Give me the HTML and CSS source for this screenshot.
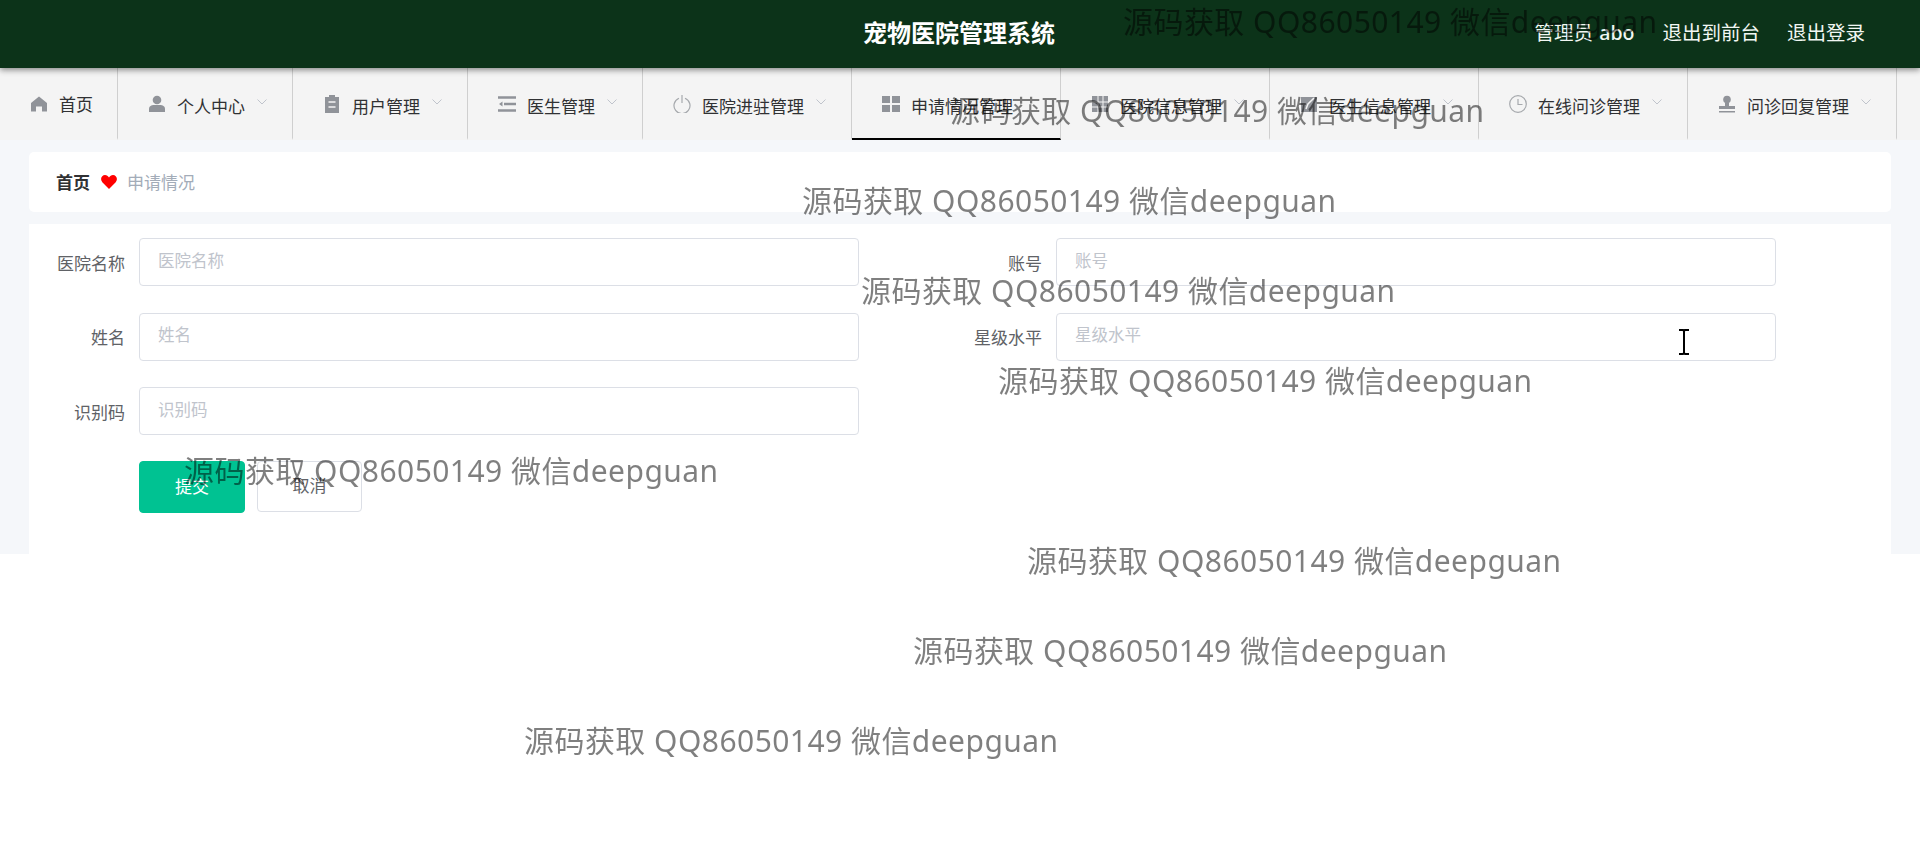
FILE: index.html
```html
<!DOCTYPE html>
<html lang="zh-CN">
<head>
<meta charset="utf-8">
<title>宠物医院管理系统</title>
<link rel="stylesheet" href="styles.css">
</head>
<body>
<header class="topbar">
  <div class="brand">宠物医院管理系统</div>
  <div class="top-links">
    <span class="user">管理员 <b>abo</b></span>
    <span>退出到前台</span>
    <span>退出登录</span>
  </div>
</header>
<nav class="menu">
  <a class="item home"><svg class="ic" viewBox="0 0 18 18"><path d="M9 1.500 1 8v8.500h5v-5h6v5h5V8z" fill="#909399"/></svg><span class="lift">首页</span></a>
  <a class="item"><svg class="ic" viewBox="0 0 18 18"><circle cx="9" cy="5" r="4.300" fill="#909399"/><path d="M1 17v-3c0-3 2.500-4 5-4h6c2.500 0 5 1 5 4v3z" fill="#909399"/></svg><span>个人中心</span><svg class="chev" viewBox="0 0 10 6"><path d="M.5.5 5 5 9.500.5" fill="none" stroke="#c0c4cc"/></svg></a>
  <a class="item"><svg class="ic" viewBox="0 0 18 18"><path d="M2 2h4V0h6v2h4v16H2z" fill="#909399"/><path d="M5.500 7h7M5.500 12h7" stroke="#f4f4f4" stroke-width="1.600"/></svg><span>用户管理</span><svg class="chev" viewBox="0 0 10 6"><path d="M.5.5 5 5 9.500.5" fill="none" stroke="#c0c4cc"/></svg></a>
  <a class="item"><svg class="ic" viewBox="0 0 18 18"><path d="M0 2.500h18M6 9h12M0 15.500h18" stroke="#909399" stroke-width="2.400"/><path d="M4.500 6.500 1 9l3.500 2.500z" fill="#909399"/></svg><span>医生管理</span><svg class="chev" viewBox="0 0 10 6"><path d="M.5.5 5 5 9.500.5" fill="none" stroke="#c0c4cc"/></svg></a>
  <a class="item"><svg class="ic" viewBox="0 0 18 18"><path d="M6 3.200a8 8 0 1 0 6 0M9 0v8" fill="none" stroke="#a6a9ad" stroke-width="1.200"/></svg><span>医院进驻管理</span><svg class="chev" viewBox="0 0 10 6"><path d="M.5.5 5 5 9.500.5" fill="none" stroke="#c0c4cc"/></svg></a>
  <a class="item active"><svg class="ic" viewBox="0 0 18 18"><path d="M0 1h8v7H0zM10 1h8v7h-8zM0 10h8v7H0zM10 10h8v7h-8z" fill="#909399"/></svg><span>申请情况管理</span></a>
  <a class="item"><svg class="ic" viewBox="0 0 18 18"><path d="M1 1h16v16H1z" fill="#909399"/><path d="M1 7h16M1 12h16M7 1v16M12 1v16" stroke="#f4f4f4"/></svg><span>医院信息管理</span><svg class="chev" viewBox="0 0 10 6"><path d="M.5.5 5 5 9.500.5" fill="none" stroke="#c0c4cc"/></svg></a>
  <a class="item"><svg class="ic" viewBox="0 0 18 18"><path d="M1 2h16v15H1z" fill="#909399"/><path d="m6 14 2-5 6-6" fill="none" stroke="#f4f4f4" stroke-width="1.500"/></svg><span>医生信息管理</span><svg class="chev" viewBox="0 0 10 6"><path d="M.5.5 5 5 9.500.5" fill="none" stroke="#c0c4cc"/></svg></a>
  <a class="item"><svg class="ic" viewBox="0 0 18 18"><circle cx="9" cy="9" r="8.300" fill="none" stroke="#a6a9ad" stroke-width="1.200"/><path d="M9 4v5.500h4.500" fill="none" stroke="#a6a9ad" stroke-width="1.200"/></svg><span>在线问诊管理</span><svg class="chev" viewBox="0 0 10 6"><path d="M.5.5 5 5 9.500.5" fill="none" stroke="#c0c4cc"/></svg></a>
  <a class="item"><svg class="ic" viewBox="0 0 18 18"><circle cx="9" cy="4.500" r="3.800" fill="#909399"/><path d="M7 8h4v3h6v3H1v-3h6zM1 16h16v1.500H1z" fill="#909399"/></svg><span>问诊回复管理</span><svg class="chev" viewBox="0 0 10 6"><path d="M.5.5 5 5 9.500.5" fill="none" stroke="#c0c4cc"/></svg></a>
  <a class="item"><svg class="ic" viewBox="0 0 18 18"><path d="M0 0h18v20H0z" fill="#909399"/></svg></a>
</nav>
<main class="content">
  <section class="crumb"><b>首页</b><svg class="heart" viewBox="0 0 16 14"><path d="M8 14 1.300 7.200C-1.500 3.800 1 0 4 0c1.800 0 3 1 4 2.400C9 1 10.200 0 12 0c3 0 5.500 3.800 2.700 7.200z" fill="#f00"/></svg><span>申请情况</span></section>
  <section class="panel">
    <form class="form">
      <label class="field"><span class="lbl">医院名称</span><input class="inp" placeholder="医院名称"></label>
      <label class="field"><span class="lbl">账号</span><input class="inp" placeholder="账号"></label>
      <label class="field"><span class="lbl">姓名</span><input class="inp" placeholder="姓名"></label>
      <label class="field"><span class="lbl">星级水平</span><input class="inp" placeholder="星级水平"></label>
      <label class="field"><span class="lbl">识别码</span><input class="inp" placeholder="识别码"></label>
    </form>
    <div class="actions">
      <button class="btn primary" type="button">提交</button>
      <button class="btn" type="button">取消</button>
    </div>
  </section>
</main>
<div class="marks">
  <span class="mark m1">源码获取 QQ86050149 微信deepguan</span>
  <span class="mark m2">源码获取 QQ86050149 微信deepguan</span>
  <span class="mark m3">源码获取 QQ86050149 微信deepguan</span>
  <span class="mark m4">源码获取 QQ86050149 微信deepguan</span>
  <span class="mark m5">源码获取 QQ86050149 微信deepguan</span>
  <span class="mark m6">源码获取 QQ86050149 微信deepguan</span>
  <span class="mark m7">源码获取 QQ86050149 微信deepguan</span>
  <span class="mark m8">源码获取 QQ86050149 微信deepguan</span>
  <span class="mark m9">源码获取 QQ86050149 微信deepguan</span>
</div>
<svg class="cursor" viewBox="0 0 14 26"><path d="M2 1h4l1 1 1-1h4M7 2v22M2 25h4l1-1 1 1h4" fill="none" stroke="#000" stroke-width="2"/></svg>
</body>
</html>
```
FILE: styles.css
```css
* { box-sizing: border-box; }
html, body { margin: 0; height: 100%; }
body {
  background: #fff;
  overflow: hidden;
  font-family: "Noto Sans CJK SC", "Noto Sans", sans-serif;
  color: #333;
}
.topbar {
  position: relative;
  z-index: 2;
  height: 68px;
  background: #0c3319;
  box-shadow: 0 2px 6px rgba(0, 0, 0, .45);
  display: flex;
  align-items: center;
  justify-content: flex-end;
  padding-right: 55px;
  color: #fff;
}
.brand {
  position: absolute;
  left: 863px;
  top: 15px;
  font-size: 24px;
  line-height: 34px;
  font-weight: 700;
}
.top-links { display: flex; gap: 27px; font-size: 19.500px; line-height: 28px; margin-top: -4px; color: #f2f7f3; }
.user { margin-right: 1px; word-spacing: 2px; }
.user b { font-weight: 500; font-family: "Noto Sans", sans-serif; }
.menu {
  height: 72px;
  background: #f4f4f4;
  display: flex;
  overflow: hidden;
  color: #303133;
  font-size: 17px;
}
.item {
  flex: none;
  height: 72px;
  display: flex;
  align-items: center;
  padding: 4px 25px 0 30px;
  border-right: 1px solid #cfcfcf;
  border-bottom: 2px solid transparent;
  white-space: nowrap;
}
.item.home { padding-right: 24px; }
.item .lift { position: relative; top: -2px; }
.item.active { border-bottom-color: #000; width: 209px; }
.ic { width: 18px; height: 18px; margin-right: 11px; flex: none; position: relative; top: -1px; }
.chev { width: 10px; height: 6px; margin-left: 12px; position: relative; top: -3px; flex: none; }
.content {
  background: #f5f7fa;
  height: 414px;
  padding: 12px 29px 0 29px;
}
.crumb {
  height: 60px;
  background: #fff;
  border-radius: 5px;
  display: flex;
  align-items: center;
  padding: 0 27px;
  font-size: 17px;
  line-height: 24px;
}
.crumb b { font-weight: 700; color: #303133; }
.heart { width: 16px; height: 14px; margin: 0 10px 0 11px; }
.crumb span { color: #a3acb8; }
.panel {
  margin-top: 12px;
  height: 330px;
  background: #fff;
  padding-top: 14px;
}
.form {
  display: grid;
  grid-template-columns: 828px 828px;
  column-gap: 89px;
  row-gap: 26.500px;
  margin-left: 2px;
}
.field { display: flex; align-items: center; height: 48px; }
.lbl { width: 94px; flex: none; text-align: right; font-size: 17px; color: #606266; margin-right: 14px; }
.inp {
  width: 720px;
  height: 48px;
  flex: none;
  border: 1px solid #dcdfe6;
  border-radius: 4px;
  padding: 0 18px 5px;
  font: inherit;
  font-size: 16.500px;
  outline: none;
  background: #fff;
}
.inp::placeholder { color: #c0c4cc; }
.actions { display: flex; gap: 12px; margin: 26px 0 0 110px; }
.btn {
  width: 105px;
  height: 51px;
  background: #fff;
  border: 1px solid #dcdfe6;
  border-radius: 4px;
  font: inherit;
  font-size: 17px;
  color: #606266;
  padding: 0 0 4px;
}
.btn.primary { width: 106px; height: 52px; background: #00c292; border-color: #00c292; color: #fff; }
.marks { position: fixed; inset: 0; z-index: 5; pointer-events: none; font-family: "Noto Sans", "Noto Sans CJK SC", sans-serif; }
.mark {
  position: absolute;
  font-size: 30px;
  line-height: 40px;
  letter-spacing: .45px;
  color: rgba(0, 0, 0, .5);
  white-space: nowrap;
}
.m1 { left: 1123px; top: 2px; }
.m2 { left: 950px; top: 91px; }
.m3 { left: 802px; top: 181px; }
.m4 { left: 861px; top: 271px; }
.m5 { left: 998px; top: 361px; }
.m6 { left: 184px; top: 451px; }
.m7 { left: 1027px; top: 541px; }
.m8 { left: 913px; top: 631px; }
.m9 { left: 524px; top: 721px; }
.cursor { position: fixed; z-index: 6; left: 1677px; top: 329px; width: 14px; height: 26px; }
```
